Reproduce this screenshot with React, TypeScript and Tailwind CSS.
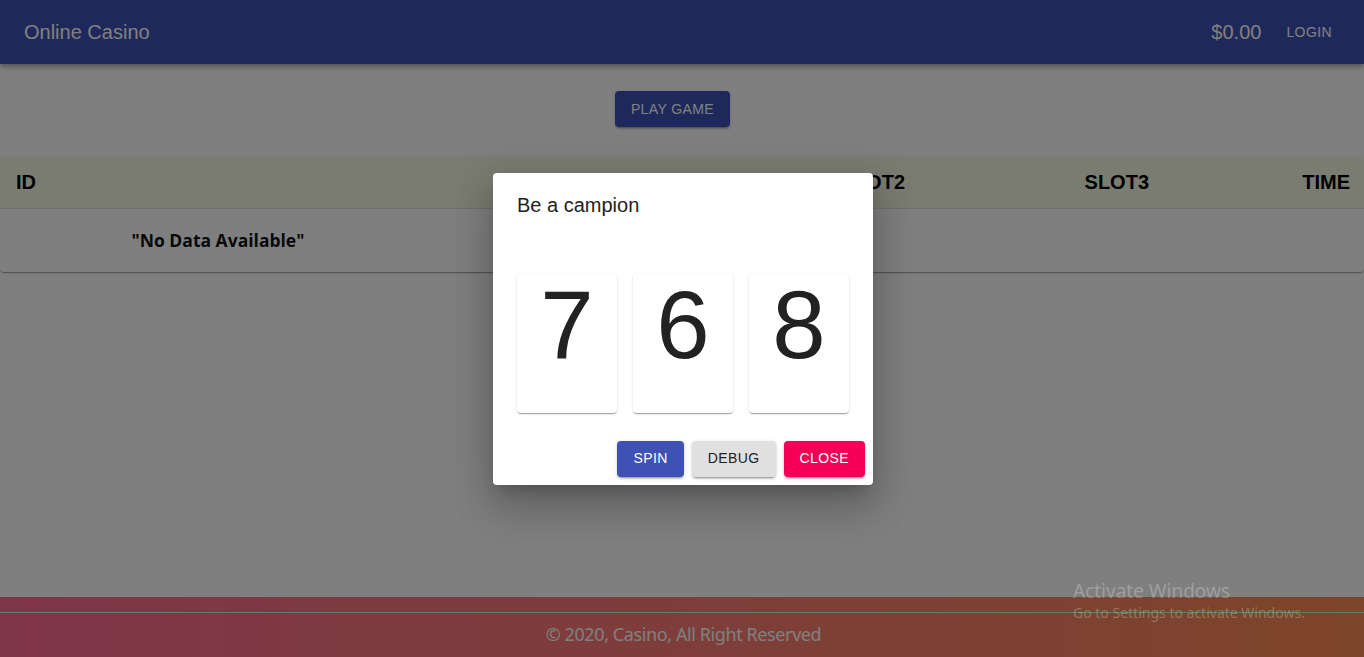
import React from "react";

const sans = { fontFamily: '"Liberation Sans", Arial, sans-serif' };

export default function App() {
  return (
    <div className="relative h-[657px] w-full overflow-hidden bg-white" style={sans}>
      <div className="flex h-full flex-col">
        {/* App bar */}
        <header className="relative z-10 flex h-16 shrink-0 items-center bg-[#3f51b5] pl-6 pr-6 text-white shadow-[0_2px_4px_-1px_rgba(0,0,0,0.2),0_4px_5px_0_rgba(0,0,0,0.14),0_1px_10px_0_rgba(0,0,0,0.12)]">
          <div className="flex-1 text-[20px] leading-none">Online Casino</div>
          <div className="text-[20px] leading-none">$0.00</div>
          <button className="ml-[17px] px-2 py-[6px] text-[14px] uppercase tracking-[0.4px]">Login</button>
        </header>

        {/* Main */}
        <main className="flex-1 pt-[27px]">
          <div className="flex justify-center pr-[19px]">
            <button className="h-9 rounded bg-[#3f51b5] px-4 text-[14px] uppercase tracking-[0.4px] text-white shadow-[0_3px_1px_-2px_rgba(0,0,0,0.2),0_2px_2px_0_rgba(0,0,0,0.14),0_1px_5px_0_rgba(0,0,0,0.12)]">
              Play Game
            </button>
          </div>
          <div className="mt-[29px] overflow-hidden rounded bg-white shadow-[0_2px_1px_-1px_rgba(0,0,0,0.2),0_1px_1px_0_rgba(0,0,0,0.14),0_1px_3px_0_rgba(0,0,0,0.12)]">
            <div className="flex h-[53px] items-center border-b border-[#e0e0e0] bg-[#f7f9e3] text-[20px] font-bold text-black">
              <div className="w-[431px] pl-4">ID</div>
              <div className="w-[244px] pr-[14px] text-right">SLOT1</div>
              <div className="w-[244px] pr-[14px] text-right">SLOT2</div>
              <div className="w-[244px] pr-[14px] text-right">SLOT3</div>
              <div className="flex-1 pr-[14px] text-right">TIME</div>
            </div>
            <div className="flex h-[63px] items-center">
              <div
                className="w-[436px] text-center text-[17.5px] font-bold text-[#111]"
                style={{ fontFamily: '"Open Sans", "Noto Sans", sans-serif' }}
              >
                "No Data Available"
              </div>
            </div>
          </div>
        </main>

        {/* Footer */}
        <footer className="relative h-[60px] shrink-0 bg-gradient-to-r from-[#ff6a90] to-[#fa8a52]">
          <div className="absolute left-0 right-0 top-[15px] h-px bg-[#d8f0f0]" />
          <div
            className="flex h-full items-center justify-center pl-[3px] pt-[14px] text-[18px] text-white"
            style={{ fontFamily: '"Noto Sans", "Open Sans", sans-serif', letterSpacing: "-0.4px" }}
          >
            © 2020, Casino, All Right Reserved
          </div>
        </footer>
      </div>

      {/* Backdrop + dialog */}
      <div className="absolute inset-0 z-20 flex items-center justify-center bg-black/50 pl-[2px]">
        <div className="flex h-[312px] w-[380px] flex-col rounded bg-white shadow-[0_11px_15px_-7px_rgba(0,0,0,0.2),0_24px_38px_3px_rgba(0,0,0,0.14),0_9px_46px_8px_rgba(0,0,0,0.12)]">
          <div className="px-6 pt-[16px] text-[20px] leading-[32px] text-[#222]">Be a campion</div>
          <div className="mt-[52px] flex gap-4 px-6">
            {["7", "6", "8"].map((d) => (
              <div
                key={d}
                className="flex h-[140px] w-[100px] justify-center rounded bg-white text-[96px] leading-[104px] text-[#222] shadow-[0_2px_1px_-1px_rgba(0,0,0,0.2),0_1px_1px_0_rgba(0,0,0,0.14),0_1px_3px_0_rgba(0,0,0,0.12)]"
              >
                {d}
              </div>
            ))}
          </div>
          <div className="mt-auto flex justify-end gap-2 p-2">
            <button className="h-9 rounded bg-[#3f51b5] px-4 text-[14px] uppercase tracking-[0.4px] text-white shadow-[0_3px_1px_-2px_rgba(0,0,0,0.2),0_2px_2px_0_rgba(0,0,0,0.14),0_1px_5px_0_rgba(0,0,0,0.12)]">
              Spin
            </button>
            <button className="h-9 rounded bg-[#e0e0e0] px-4 text-[14px] uppercase tracking-[0.4px] text-[#222] shadow-[0_3px_1px_-2px_rgba(0,0,0,0.2),0_2px_2px_0_rgba(0,0,0,0.14),0_1px_5px_0_rgba(0,0,0,0.12)]">
              Debug
            </button>
            <button className="h-9 rounded bg-[#f50057] px-4 text-[14px] uppercase tracking-[0.4px] text-white shadow-[0_3px_1px_-2px_rgba(0,0,0,0.2),0_2px_2px_0_rgba(0,0,0,0.14),0_1px_5px_0_rgba(0,0,0,0.12)]">
              Close
            </button>
          </div>
        </div>
      </div>

      {/* Windows watermark */}
      <div
        className="pointer-events-none absolute left-[1073px] top-[579px] z-30 text-white/25"
        style={{ fontFamily: '"Noto Sans", "Open Sans", sans-serif' }}
      >
        <div className="text-[19px] leading-[24px]">Activate Windows</div>
        <div className="text-[14px] leading-[20px]">Go to Settings to activate Windows.</div>
      </div>
    </div>
  );
}
